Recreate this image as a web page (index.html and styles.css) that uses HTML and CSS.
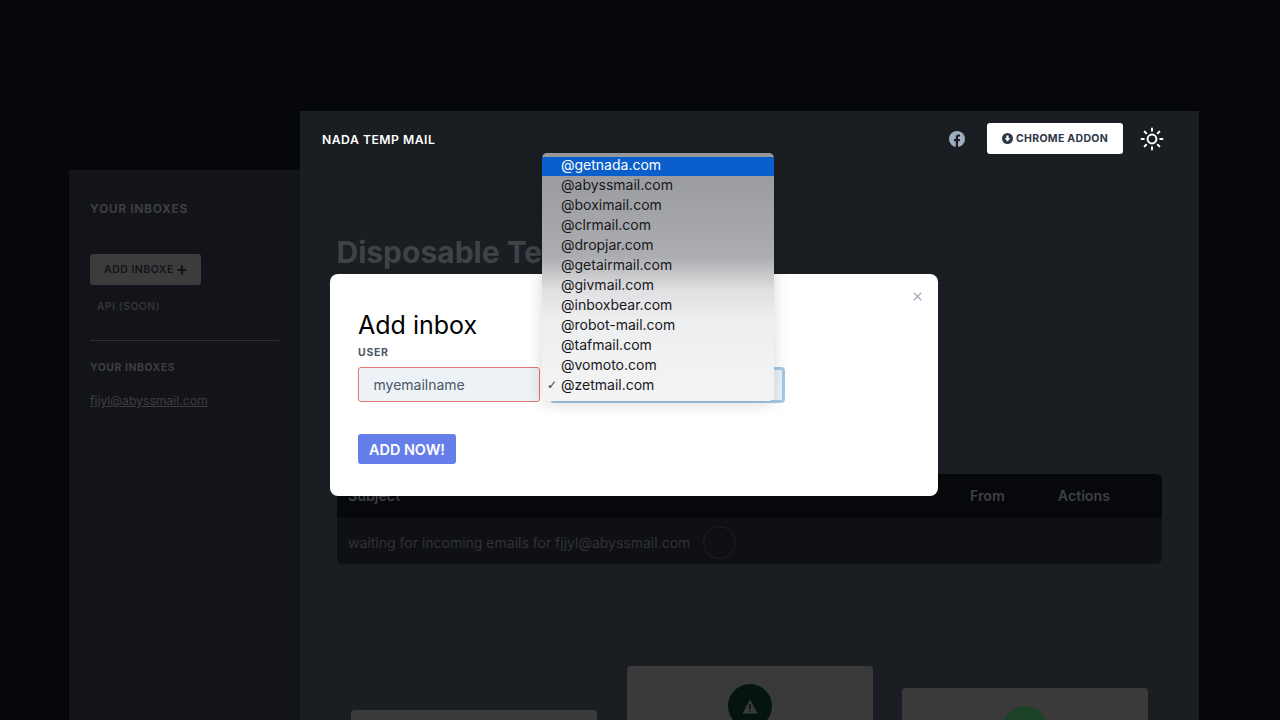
FILE: index.html
```html
<!DOCTYPE html>
<html lang="en">
<head>
  <meta charset="UTF-8" />
  <meta name="viewport" content="width=device-width, initial-scale=1.0"/>
  <title>Nada Temp Mail</title>
  <link rel="stylesheet" href="styles.css">
</head>
<body>
  <div class="app">
    <!-- Sidebar -->
    <aside class="sidebar">
      <h4 class="side-title">YOUR INBOXES</h4>
      <button class="add-btn">ADD INBOXE
        <svg width="10" height="10" viewBox="0 0 10 10"><path d="M5 .5v9M.5 5h9" stroke="currentColor" stroke-width="2.2"/></svg>
      </button>
      <div class="api-link">API (SOON)</div>
      <hr class="side-line" />
      <h5 class="side-sub">YOUR INBOXES</h5>
      <a class="side-mail">fjjyl@abyssmail.com</a>
    </aside>

    <!-- Main area -->
    <main class="main">
      <header class="topbar">
        <div class="brand">NADA TEMP MAIL</div>
        <div class="top-actions">
          <svg class="fb" width="16" height="16" viewBox="0 0 16 16"><circle cx="8" cy="8" r="8" fill="#a0aec0"/><path d="M6.8 16V10.2H5V8h1.8V6.4C6.8 4.6 7.9 3.6 9.5 3.6c.8 0 1.5.1 1.5.1v1.8h-.9c-.9 0-1.1.5-1.1 1.1V8h2l-.3 2.2H9V16z" fill="#1a1d22"/></svg>
          <button class="addon-btn">
            <svg width="11" height="11" viewBox="0 0 12 12"><circle cx="6" cy="6" r="6" fill="#2d3748"/><path d="M4.8 2.6h2.4v3h2L6 9.4 2.8 5.6h2z" fill="#fff"/></svg>
            CHROME ADDON
          </button>
          <svg class="sun" width="24" height="24" viewBox="0 0 24 24" fill="none" stroke="#fff" stroke-width="2" stroke-linecap="round"><circle cx="12" cy="12" r="4.4"/><path d="M12 1.500v2.300M12 20.200v2.300M1.500 12h2.300M20.200 12h2.300M4.600 4.600l1.600 1.600M17.800 17.800l1.600 1.600M4.600 19.400l1.600-1.600M17.800 6.200l1.600-1.600"/></svg>
        </div>
      </header>

      <h1 class="headline">Disposable Temporary E-mail</h1>

      <div class="mail-table">
        <div class="table-head">
          <span class="col-subject">Subject</span>
          <span class="col-from">From</span>
          <span class="col-actions">Actions</span>
        </div>
        <div class="table-row">
          <span>waiting for incoming emails for fjjyl@abyssmail.com</span>
          <span class="spinner"></span>
        </div>
      </div>

      <div class="cards">
        <div class="card card-low"></div>
        <div class="card card-high">
          <span class="badge badge-dark">
            <svg width="16" height="15" viewBox="0 0 16 15"><path d="M8 0.500L15.500 14.500H0.500z" fill="#3a3a3a"/><path d="M8 5v5M8 11.200v1.600" stroke="#06140f" stroke-width="1.600"/></svg>
          </span>
        </div>
        <div class="card card-mid">
          <span class="badge badge-green"></span>
        </div>
      </div>
    </main>
  </div>

  <!-- Modal over the dimmed page -->
  <div class="modal">
    <button class="modal-close">
      <svg width="9" height="9" viewBox="0 0 9 9"><path d="M.8.800l7.400 7.400M8.200.800L.8 8.200" stroke="#a0aec0" stroke-width="1.300"/></svg>
    </button>
    <h2 class="modal-title">Add inbox</h2>
    <label class="field-label">USER</label>
    <div class="field-row">
      <div class="user-input">myemailname</div>
      <div class="domain-select"></div>
    </div>
    <button class="add-now">ADD NOW!</button>
  </div>

  <!-- Native select popup -->
  <ul class="dropdown">
    <li class="active">@getnada.com</li>
    <li>@abyssmail.com</li>
    <li>@boximail.com</li>
    <li>@clrmail.com</li>
    <li>@dropjar.com</li>
    <li>@getairmail.com</li>
    <li>@givmail.com</li>
    <li>@inboxbear.com</li>
    <li>@robot-mail.com</li>
    <li>@tafmail.com</li>
    <li>@vomoto.com</li>
    <li class="checked">@zetmail.com</li>
  </ul>
</body>
</html>
```

FILE: styles.css
```css
body {
  margin: 0;
  height: 720px;
  overflow: hidden;
  font-family: Inter, "Liberation Sans", sans-serif;
  background-color: #05070c;
}

.app {
  display: flex;
  align-items: flex-start;
  padding: 111px 0 0 69px;
  width: 1130px;
}

.sidebar {
  box-sizing: border-box;
  width: 231px;
  height: 550px;
  margin-top: 59px;
  padding: 31px 21px 0;
  background-color: #131419;
}

.side-title {
  margin: 0;
  font-size: 12.1px;
  line-height: 16px;
  font-weight: 700;
  letter-spacing: 0.6px;
  color: #3c3e43;
}

.add-btn {
  display: flex;
  align-items: center;
  gap: 3px;
  height: 31px;
  width: 111px;
  margin-top: 37px;
  padding: 0 0 0 14px;
  border: none;
  border-radius: 3px;
  background-color: #3c3c3c;
  color: #131419;
  font-family: inherit;
  font-size: 10.5px;
  font-weight: 600;
  letter-spacing: 0.5px;
  white-space: nowrap;
}

.api-link {
  margin: 14px 0 0 7px;
  font-size: 10.2px;
  line-height: 14px;
  font-weight: 600;
  letter-spacing: 0.6px;
  color: #34363b;
}

.side-line {
  margin: 27px 0 0;
  border: none;
  border-top: 1px solid #2f3035;
  width: 189px;
}

.side-sub {
  margin: 20px 0 0;
  font-size: 10.4px;
  line-height: 14px;
  font-weight: 700;
  letter-spacing: 0.6px;
  color: #3c3e43;
}

.side-mail {
  display: block;
  margin-top: 18px;
  font-size: 12.2px;
  line-height: 16px;
  color: #3c3e43;
  text-decoration: underline;
}

.main {
  box-sizing: border-box;
  width: 899px;
  height: 609px;
  padding: 0 37px;
  overflow: hidden;
  background-color: #1a1d22;
}

.topbar {
  display: flex;
  justify-content: space-between;
  align-items: center;
  height: 56px;
  margin-left: -15px;
}

.brand {
  font-size: 12.2px;
  font-weight: 600;
  letter-spacing: 0.5px;
  color: #fff;
}

.top-actions {
  display: flex;
  align-items: center;
  margin-top: -1px;
}

.fb {
  margin-right: 0;
  margin-left: 1px;
}

.addon-btn {
  display: flex;
  align-items: center;
  justify-content: center;
  gap: 3px;
  width: 136px;
  height: 31px;
  margin-left: 22px;
  padding: 0;
  border: none;
  border-radius: 3px;
  background-color: #fff;
  color: #2d3748;
  font-family: inherit;
  font-size: 10.5px;
  font-weight: 700;
  letter-spacing: 0.3px;
}

.sun {
  margin: 0 -2px 0 17px;
}

.headline {
  margin: 66px 0 0 -0.5px;
  font-size: 30px;
  line-height: 38px;
  font-weight: 700;
  white-space: nowrap;
  color: #3f4247;
}

.mail-table {
  margin-top: 203px;
  border-radius: 6px;
  overflow: hidden;
}

.table-head {
  box-sizing: border-box;
  display: flex;
  align-items: center;
  height: 44px;
  padding: 0 11px 2px;
  background-color: #07080c;
  font-size: 14.2px;
  font-weight: 600;
  color: #3e4044;
}

.col-subject {
  flex: 1;
}

.col-from {
  margin-right: 53px;
}

.col-actions {
  margin-right: 41px;
}

.table-row {
  box-sizing: border-box;
  display: flex;
  align-items: center;
  gap: 13px;
  height: 46px;
  padding: 3px 11px 0;
  background-color: #0f1014;
  font-size: 14px;
  color: #303237;
}

.spinner {
  box-sizing: border-box;
  width: 33px;
  height: 33px;
  border: 1px solid #202125;
  border-radius: 50%;
}

.cards {
  display: flex;
  align-items: flex-start;
  gap: 29px;
  margin: 0 14px;
}

.card {
  display: flex;
  justify-content: center;
  flex: 0 0 246px;
  height: 120px;
  border-radius: 4px;
  background-color: #3a3a3a;
}

.card-low {
  margin-top: 146px;
}

.card-high {
  margin-top: 102px;
  margin-left: 1px;
}

.card-mid {
  margin-top: 124px;
}

.badge {
  display: flex;
  align-items: center;
  justify-content: center;
  width: 44px;
  height: 44px;
  margin: 18px 0 0 -1px;
  border-radius: 50%;
}

.badge-dark {
  background-color: #06140f;
}

.badge-green {
  background-color: #1b4226;
}

.modal {
  position: absolute;
  box-sizing: border-box;
  left: 329.5px;
  top: 274px;
  width: 608.5px;
  height: 222px;
  padding: 34px 28.5px 0;
  border-radius: 8px;
  background-color: #fff;
}

.modal-close {
  position: absolute;
  top: 18px;
  right: 16px;
  padding: 0;
  border: none;
  background: none;
  line-height: 0;
}

.modal-title {
  margin: 0;
  font-size: 25px;
  line-height: 34px;
  font-weight: 400;
  color: #000;
}

.field-label {
  display: block;
  margin-top: 4px;
  font-size: 10.5px;
  line-height: 14px;
  font-weight: 700;
  letter-spacing: 0.7px;
  color: #4a5568;
}

.field-row {
  display: flex;
  align-items: flex-start;
  gap: 10px;
  margin-top: 7px;
}

.user-input {
  box-sizing: border-box;
  width: 182px;
  height: 35px;
  padding-left: 14.5px;
  border: 1px solid #e57373;
  border-radius: 3px;
  background-color: #edf2f7;
  font-size: 14px;
  line-height: 33px;
  color: #4a5568;
}

.domain-select {
  box-sizing: border-box;
  width: 235px;
  height: 36px;
  border: 3px solid #a6c8e4;
  border-radius: 4px;
  background-color: #edf2f7;
}

.add-now {
  display: block;
  width: 98px;
  height: 30px;
  margin-top: 31px;
  padding: 0;
  border: none;
  border-radius: 3px;
  background-color: #667eea;
  color: #fff;
  font-family: inherit;
  font-size: 14.4px;
  font-weight: 600;
}

.dropdown {
  position: absolute;
  box-sizing: border-box;
  left: 542px;
  top: 153px;
  width: 232px;
  height: 248px;
  margin: 0;
  padding: 2px 0 0;
  list-style: none;
  border-radius: 5px;
  background: linear-gradient(#96979b 0, #acadb0 104px, #c8c9cb 122px, #e0e0e2 137px, #edeeef 167px, #f4f4f5 248px);
  box-shadow: 0 2px 16px rgba(0, 0, 0, 0.16);
  font-size: 14px;
  line-height: 20px;
  color: #17181b;
}

.dropdown li {
  position: relative;
  height: 20px;
  padding-left: 19px;
}

.dropdown li.active {
  background: linear-gradient(transparent 2px, #0a5fcc 2px);
  box-shadow: 0 1px #0a5fcc;
  color: #fff;
}

.dropdown li.checked::before {
  content: "✓";
  position: absolute;
  left: 5px;
  font-family: "DejaVu Sans", sans-serif;
  font-size: 12px;
  color: #333;
}
```
